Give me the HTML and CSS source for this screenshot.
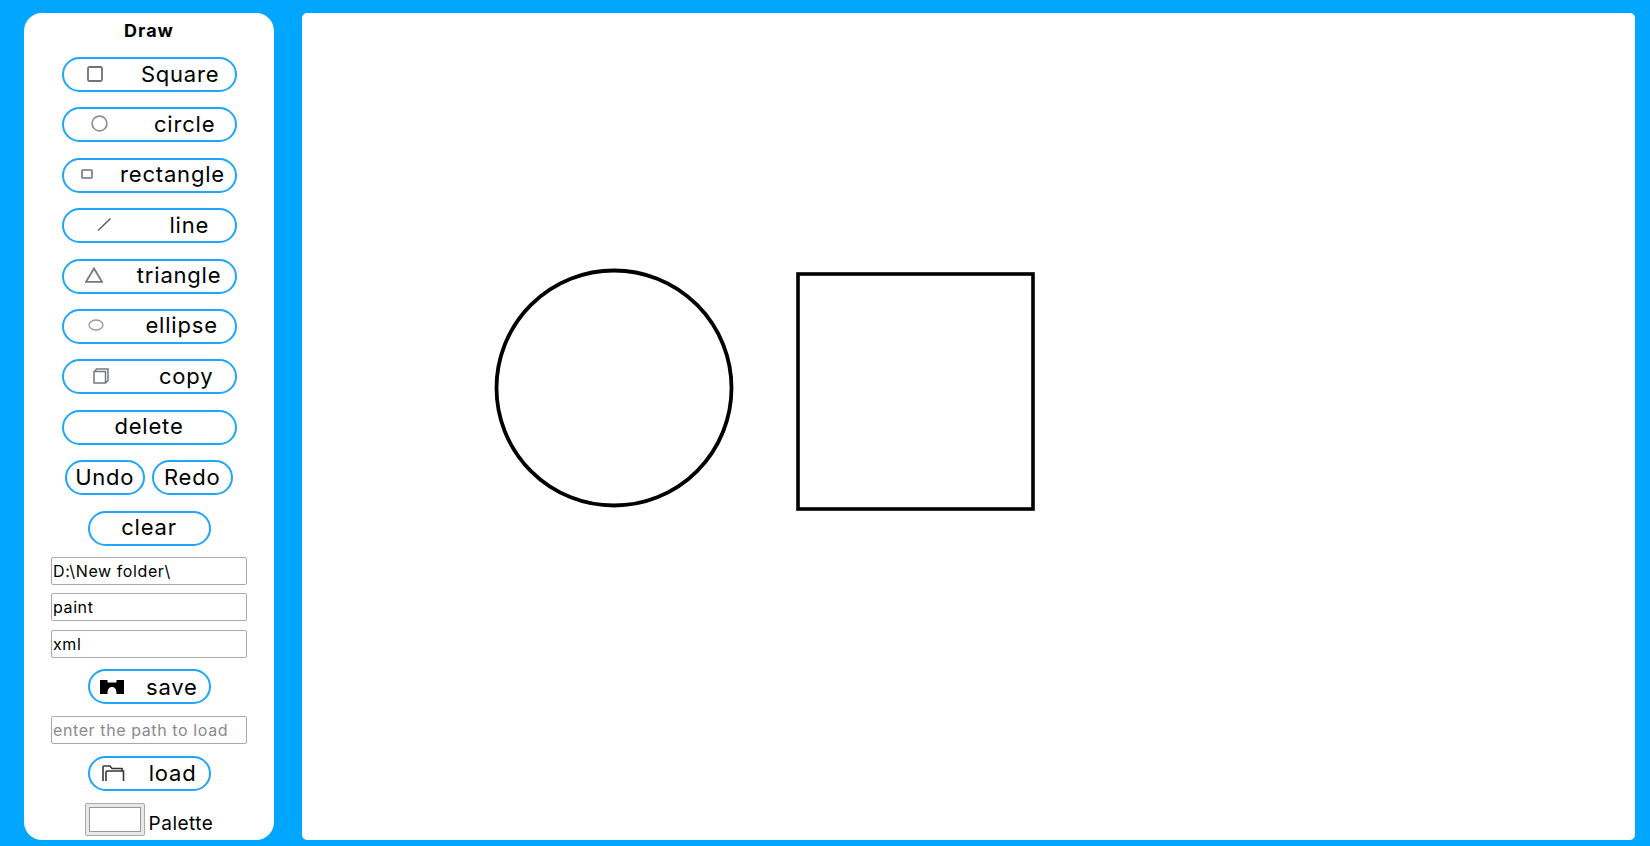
FILE: index.html
```html
<!DOCTYPE html>
<html lang="en">
<head>
	<meta charset="UTF-8">
	<meta name="viewport" content="width=device-width, initial-scale=1.0">
	<title>Paint</title>
	<link rel="stylesheet" href="styles.css">
</head>
<body>
	<div class="page">
		<div class="sidebar">
			<h4>Draw</h4>
			<button class="btn">
				<svg class="icon" width="16" height="16" viewBox="0 0 16 16"><rect x="1" y="1" width="14" height="14" rx="1.5" fill="none" stroke="#6e7378" stroke-width="1.8"/></svg>
				<span>Square</span>
			</button>
			<button class="btn">
				<svg class="icon" width="17" height="17" viewBox="0 0 17 17"><circle cx="8.5" cy="8.5" r="7.4" fill="none" stroke="#8a8e93" stroke-width="1.7"/></svg>
				<span>circle</span>
			</button>
			<button class="btn">
				<svg class="icon" width="12" height="10" viewBox="0 0 12 10"><rect x="1" y="1" width="10" height="8" rx=".8" fill="none" stroke="#6e7378" stroke-width="1.6"/></svg>
				<span>rectangle</span>
			</button>
			<button class="btn">
				<svg class="icon" width="14" height="13" viewBox="0 0 14 13"><path d="M1 12.5 L13.5 .5" fill="none" stroke="#55595e" stroke-width="1.4"/></svg>
				<span>line</span>
			</button>
			<button class="btn">
				<svg class="icon" width="18" height="16" viewBox="0 0 18 16"><path d="M9 1.5 L17 14.8 L1 14.8 Z" fill="none" stroke="#74787d" stroke-width="1.8"/></svg>
				<span>triangle</span>
			</button>
			<button class="btn">
				<svg class="icon" width="16" height="12" viewBox="0 0 16 12"><ellipse cx="8" cy="6" rx="7" ry="5" fill="none" stroke="#909498" stroke-width="1.3"/></svg>
				<span>ellipse</span>
			</button>
			<button class="btn">
				<svg class="icon" width="16" height="16" viewBox="0 0 16 16"><path d="M1 3.5 H12.5 V15 H1 Z M2 3 L3.5 1 H15 V12.5 L13 14.5" fill="none" stroke="#74787d" stroke-width="1.5"/></svg>
				<span>copy</span>
			</button>
			<button class="btn">delete</button>
			<div class="row">
				<button class="btn small">Undo</button>
				<button class="btn small">Redo</button>
			</div>
			<button class="btn medium clear">clear</button>
			<input class="field" type="text" value="D:\New folder\">
			<input class="field" type="text" value="paint">
			<input class="field" type="text" value="xml">
			<button class="btn medium">
				<svg class="icon" width="24" height="14" viewBox="0 0 24 14"><path d="M0 0 H7.5 V2.5 H16.5 V0 H24 V14 H16.5 C16.5 9 15 7 12 7 C9 7 7.5 9 7.5 14 H0 Z" fill="#000"/></svg>
				<span>save</span>
			</button>
			<input class="field" type="text" placeholder="enter the path to load">
			<button class="btn medium">
				<svg class="icon" width="23" height="17" viewBox="0 0 23 17"><path d="M1 16 V2 Q1 1 2 1 H8 L10 3.5 H20 V6 M4 16 V7 Q4 6 5 6 H21.5 V16" fill="none" stroke="#33373b" stroke-width="1.6"/></svg>
				<span>load</span>
			</button>
			<div class="palette">
				<input class="swatch" type="color" value="#ffffff">
				<label>Palette</label>
			</div>
		</div>
		<div class="canvas">
			<svg width="1333" height="827" viewBox="0 0 1333 827">
				<circle cx="312" cy="375" r="117.5" fill="none" stroke="#000" stroke-width="3.8"/>
				<rect x="496" y="261" width="235" height="235" fill="none" stroke="#000" stroke-width="3.6"/>
			</svg>
		</div>
	</div>
</body>
</html>
```

FILE: styles.css
```css
*{
	margin: 0;
	padding: 0;
	box-sizing: border-box;
}
body{
	background-color: #00a6ff;
	font-family: "Inter", "Noto Sans", sans-serif;
	color: #000;
	overflow: hidden;
}
.page{
	display: flex;
	gap: 28px;
	height: 846px;
	padding: 13px 15px 6px 24px;
}
.sidebar{
	width: 250px;
	background-color: #fff;
	border-radius: 18px;
	display: flex;
	flex-direction: column;
	align-items: center;
	padding-top: 8px;
}
.sidebar h4{
	font-size: 18px;
	font-weight: 700;
	letter-spacing: 1px;
	line-height: 20px;
	margin-bottom: 16px;
}
.btn{
	width: 175px;
	height: 35px;
	flex: none;
	margin-bottom: 15.4px;
	display: flex;
	align-items: center;
	justify-content: space-around;
	padding-left: 4px;
	padding-bottom: 2px;
	background-color: #fff;
	border: 2px solid #1fa5fb;
	border-radius: 18px;
	font-family: inherit;
	font-size: 22px;
	line-height: 26px;
	letter-spacing: .8px;
	color: #000;
}
.btn span{
	margin-right: -4px;
}
.btn:not(:has(svg)){
	justify-content: center;
	padding-left: 0;
}
.row{
	display: flex;
	gap: 7px;
	margin-left: -1px;
}
.small{
	width: 80.5px;
}
.medium{
	width: 123px;
	margin-bottom: 12px;
	padding-left: 0;
	padding-bottom: 0;
}
.medium span{
	margin-right: 0;
}
.clear{
	margin-bottom: 11px;
	padding-bottom: 2px;
}
.field{
	width: 196px;
	height: 28px;
	flex: none;
	margin-bottom: 8.5px;
	padding: 0 1px;
	border: 1.5px solid #a9a9a9;
	border-radius: 2px;
	font-family: inherit;
	font-size: 16px;
	letter-spacing: .6px;
	color: #000;
}
.field::placeholder{
	color: #8a8a8a;
}
.field + .medium{
	margin-top: 3px;
}
.palette{
	display: flex;
	align-items: flex-end;
	gap: 4px;
}
.palette label{
	font-size: 19px;
	letter-spacing: .5px;
	line-height: 25px;
}
.swatch{
	width: 60px;
	height: 33px;
	padding: 2px;
	background-color: #e8e8e8;
	border: 1.5px solid #aaa;
	border-radius: 2px;
}
.swatch::-webkit-color-swatch-wrapper{
	padding: 1px;
}
.swatch::-webkit-color-swatch{
	border: 1.5px solid #999;
}
.canvas{
	flex: 1;
	background-color: #fff;
	border-radius: 5px;
}
.canvas svg{
	display: block;
}
```
